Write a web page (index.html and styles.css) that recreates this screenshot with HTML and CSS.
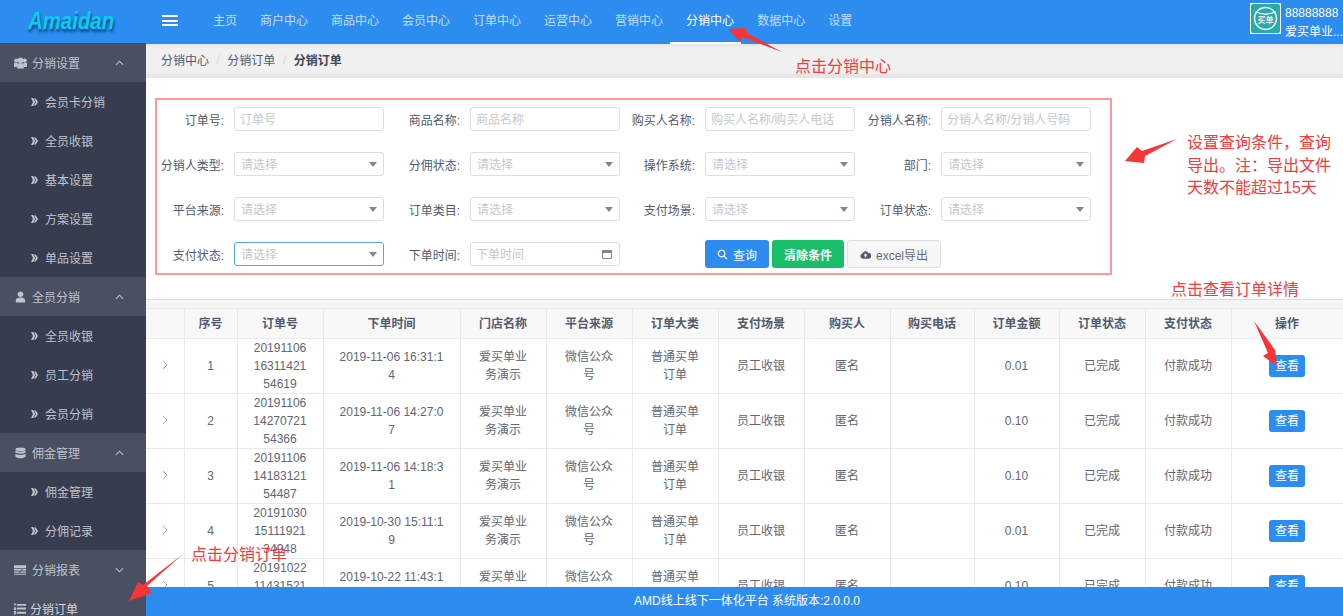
FILE: index.html
```html
<!DOCTYPE html>
<html lang="zh-CN">
<head>
<meta charset="utf-8">
<title>分销订单</title>
<link rel="stylesheet" href="styles.css">
</head>
<body>
<svg class="defs" width="0" height="0"><symbol id="dbl" viewBox="0 0 7 8"><path d="M0 0h2.200L4.200 4 2.200 8H0l2-4zM3 .500h1.800L7 4 4.800 7.500H3L5 4z"/></symbol></svg>
<div class="app">
  <header class="topbar">
    <div class="logo"><span>Amaidan</span></div>
    <div class="burger"><i></i><i></i><i></i></div>
    <nav class="nav">
      <a>主页</a><a>商户中心</a><a>商品中心</a><a>会员中心</a><a>订单中心</a><a>运营中心</a><a>营销中心</a><a class="active">分销中心</a><a>数据中心</a><a>设置</a>
    </nav>
    <div class="account">
      <svg class="avatar" viewBox="0 0 31 31" width="31" height="31">
        <rect width="31" height="31" fill="#fff"/>
        <rect x="1" y="1" width="29" height="29" rx="2" fill="#2aa9a9"/>
        <circle cx="15.500" cy="15.500" r="11" fill="none" stroke="#e8f6f6" stroke-width="1.400"/>
        <path d="M5.500 8.500 Q15.500 14 25.500 8.500" fill="none" stroke="#e8f6f6" stroke-width="1.400"/>
        <text x="15.500" y="20" text-anchor="middle" class="avatar-text">买单</text>
      </svg>
      <div class="account-text"><div>88888888</div><div>爱买单业...</div></div>
    </div>
  </header>
  <div class="body">
    <aside class="sidebar">
      <div class="group"><svg class="gi" viewBox="0 0 14 12"><circle cx="7" cy="3.200" r="3"/><circle cx="2.400" cy="3.400" r="2.200"/><circle cx="11.600" cy="3.400" r="2.200"/><path d="M3.400 6.400h7.200v5.400H3.400zM0 5.800h3.200v4.400H0zM10.800 5.800H14v4.400h-3.200z"/></svg><span>分销设置</span><svg class="chev" viewBox="0 0 10 6"><path d="M1 5l4-4 4 4"/></svg></div>
      <div class="item"><svg class="dbl"><use href="#dbl"/></svg>会员卡分销</div>
      <div class="item"><svg class="dbl"><use href="#dbl"/></svg>全员收银</div>
      <div class="item"><svg class="dbl"><use href="#dbl"/></svg>基本设置</div>
      <div class="item"><svg class="dbl"><use href="#dbl"/></svg>方案设置</div>
      <div class="item"><svg class="dbl"><use href="#dbl"/></svg>单品设置</div>
      <div class="group"><svg class="gi" viewBox="0 0 14 12"><circle cx="7" cy="3" r="3"/><path d="M2 12V9.500C2 7.500 4 6.500 7 6.500s5 1 5 3V12z"/></svg><span>全员分销</span><svg class="chev" viewBox="0 0 10 6"><path d="M1 5l4-4 4 4"/></svg></div>
      <div class="item"><svg class="dbl"><use href="#dbl"/></svg>全员收银</div>
      <div class="item"><svg class="dbl"><use href="#dbl"/></svg>员工分销</div>
      <div class="item"><svg class="dbl"><use href="#dbl"/></svg>会员分销</div>
      <div class="group"><svg class="gi" viewBox="0 0 14 12"><ellipse cx="7" cy="2" rx="5.500" ry="2"/><path d="M1.500 3.400C3 5 11 5 12.500 3.400V5.500C11 7.200 3 7.200 1.500 5.500zM1.500 6.900C3 8.500 11 8.500 12.500 6.900V9.800C11 12.400 3 12.400 1.500 9.800z"/></svg><span>佣金管理</span><svg class="chev" viewBox="0 0 10 6"><path d="M1 5l4-4 4 4"/></svg></div>
      <div class="item"><svg class="dbl"><use href="#dbl"/></svg>佣金管理</div>
      <div class="item"><svg class="dbl"><use href="#dbl"/></svg>分佣记录</div>
      <div class="group"><svg class="gi" viewBox="0 0 14 12"><path d="M0 1h13v3H0zM0 5h8v1.500H0zM9 5h4v1.500H9zM0 7.500h6V9H0zM7 7.500h6V9H7zM0 10h13v1H0z"/></svg><span>分销报表</span><svg class="chev" viewBox="0 0 10 6"><path d="M1 1l4 4 4-4"/></svg></div>
      <div class="group current"><svg class="gi" viewBox="0 0 14 12"><path d="M0 0h2v2H0zM3 .500h10v2H3zM0 4h2v3H0zM3 4.500h10v2H3zM0 8h2v4H0zM3 9h10v2H3z"/></svg><span>分销订单</span></div>
    </aside>
    <main class="main">
      <div class="crumbs"><span>分销中心</span><i>/</i><span>分销订单</span><i>/</i><b>分销订单</b></div>
      <section class="filter">
        <div class="filter-box">
          <div class="field"><label>订单号:</label><div class="ctl ph">订单号</div></div>
          <div class="field"><label>商品名称:</label><div class="ctl ph">商品名称</div></div>
          <div class="field"><label>购买人名称:</label><div class="ctl ph">购买人名称/购买人电话</div></div>
          <div class="field"><label>分销人名称:</label><div class="ctl ph">分销人名称/分销人号码</div></div>

          <div class="field"><label>分销人类型:</label><div class="ctl sel">请选择</div></div>
          <div class="field"><label>分佣状态:</label><div class="ctl sel">请选择</div></div>
          <div class="field"><label>操作系统:</label><div class="ctl sel">请选择</div></div>
          <div class="field"><label>部门:</label><div class="ctl sel">请选择</div></div>

          <div class="field"><label>平台来源:</label><div class="ctl sel">请选择</div></div>
          <div class="field"><label>订单类目:</label><div class="ctl sel">请选择</div></div>
          <div class="field"><label>支付场景:</label><div class="ctl sel">请选择</div></div>
          <div class="field"><label>订单状态:</label><div class="ctl sel">请选择</div></div>

          <div class="field"><label>支付状态:</label><div class="ctl sel focus">请选择</div></div>
          <div class="field"><label>下单时间:</label><div class="ctl ph date">下单时间
            <svg class="cal" viewBox="0 0 10 10"><path d="M0.500 1.500h9v8h-9z" fill="none" stroke="#808695"/><path d="M0 1h10v3H0z" fill="#808695"/></svg></div></div>
          <div class="actions">
            <button class="btn primary"><svg viewBox="0 0 12 12" width="11" height="11"><circle cx="5" cy="5" r="3.600" fill="none" stroke="#fff" stroke-width="1.200"/><path d="M7.700 7.700L11 11" stroke="#fff" stroke-width="1.400"/></svg>查询</button>
            <button class="btn success">清除条件</button>
            <button class="btn plain"><svg viewBox="0 0 12 9" width="11" height="9"><path d="M3 9a2.700 2.700 0 0 1-.5-5.300A3.600 3.600 0 0 1 9.300 3 3 3 0 0 1 9.500 9z" fill="#515a6e"/><path d="M6 3l2 2.500H4z M5.300 5h1.400v2.500H5.300z" fill="#f7f7f7"/></svg>excel导出</button>
          </div>
        </div>
      </section>
      <div class="table-wrap">
        <table class="orders">
          <colgroup>
            <col class="c38"><col class="c53"><col class="c86"><col class="c137"><col class="c86"><col class="c86"><col class="c86"><col class="c86"><col class="c86"><col class="c84"><col class="c85"><col class="c86"><col class="c86"><col class="c112">
          </colgroup>
          <thead>
            <tr><th></th><th>序号</th><th>订单号</th><th>下单时间</th><th>门店名称</th><th>平台来源</th><th>订单大类</th><th>支付场景</th><th>购买人</th><th>购买电话</th><th>订单金额</th><th>订单状态</th><th>支付状态</th><th>操作</th></tr>
          </thead>
          <tbody>
            <tr><td class="exp"><svg viewBox="0 0 6 10" width="6" height="10"><path d="M1 1l4 4-4 4"/></svg></td><td>1</td><td>201911061631142154619</td><td>2019-11-06 16:31:14</td><td>爱买单业务演示</td><td>微信公众号</td><td>普通买单订单</td><td>员工收银</td><td>匿名</td><td></td><td>0.01</td><td>已完成</td><td>付款成功</td><td><button class="view">查看</button></td></tr>
            <tr><td class="exp"><svg viewBox="0 0 6 10" width="6" height="10"><path d="M1 1l4 4-4 4"/></svg></td><td>2</td><td>201911061427072154366</td><td>2019-11-06 14:27:07</td><td>爱买单业务演示</td><td>微信公众号</td><td>普通买单订单</td><td>员工收银</td><td>匿名</td><td></td><td>0.10</td><td>已完成</td><td>付款成功</td><td><button class="view">查看</button></td></tr>
            <tr><td class="exp"><svg viewBox="0 0 6 10" width="6" height="10"><path d="M1 1l4 4-4 4"/></svg></td><td>3</td><td>201911061418312154487</td><td>2019-11-06 14:18:31</td><td>爱买单业务演示</td><td>微信公众号</td><td>普通买单订单</td><td>员工收银</td><td>匿名</td><td></td><td>0.10</td><td>已完成</td><td>付款成功</td><td><button class="view">查看</button></td></tr>
            <tr><td class="exp"><svg viewBox="0 0 6 10" width="6" height="10"><path d="M1 1l4 4-4 4"/></svg></td><td>4</td><td>201910301511192134948</td><td>2019-10-30 15:11:19</td><td>爱买单业务演示</td><td>微信公众号</td><td>普通买单订单</td><td>员工收银</td><td>匿名</td><td></td><td>0.01</td><td>已完成</td><td>付款成功</td><td><button class="view">查看</button></td></tr>
            <tr><td class="exp"><svg viewBox="0 0 6 10" width="6" height="10"><path d="M1 1l4 4-4 4"/></svg></td><td>5</td><td>201910221143152154210</td><td>2019-10-22 11:43:15</td><td>爱买单业务演示</td><td>微信公众号</td><td>普通买单订单</td><td>员工收银</td><td>匿名</td><td></td><td>0.10</td><td>已完成</td><td>付款成功</td><td><button class="view">查看</button></td></tr>
          </tbody>
        </table>
      </div>
      <footer class="footer">AMD线上线下一体化平台 系统版本:2.0.0.0</footer>
    </main>
  </div>
  <svg class="arrows" width="1343" height="616" viewBox="0 0 1343 616">
    <polygon points="728,29 746,28 747,33 782,52 742,37 740,42"/>
    <polygon points="1125,161 1137,147 1142,151 1177,139 1145,156 1144,163"/>
    <polygon points="1254,321 1275,350 1277,366 1263,356 1268,353"/>
    <polygon points="183,554 147,586 152,593 129,601 138,582 143,585"/>
  </svg>
  <div class="note n1">点击分销中心</div>
  <div class="note n2">设置查询条件，查询<br>导出。注：导出文件<br>天数不能超过15天</div>
  <div class="note n3">点击查看订单详情</div>
  <div class="note n4">点击分销订单</div>
</div>
</body>
</html>
```

FILE: styles.css
```css
* { box-sizing: border-box; }
html, body { margin: 0; padding: 0; height: 100%; overflow: hidden; }
body {
  font-family: "Liberation Sans", "Noto Sans CJK SC", sans-serif;
  font-size: 12px;
  color: #515a6e;
  background: #fff;
}
.defs { position: absolute; }
.app { position: relative; width: 1343px; height: 616px; display: flex; flex-direction: column; overflow: hidden; }

/* top bar */
.topbar { height: 44px; flex: none; background: #2d8cf0; display: flex; align-items: stretch; color: #fff; }
.logo {
  width: 146px; padding: 7px 0 0 28px;
  font-size: 24px; line-height: 28px; font-weight: bold; font-style: italic;
  color: #08cdec; text-shadow: 1px 3px 3px #0b3f83;
}
.logo span { display: block; transform: scaleX(.85); transform-origin: left center; }
.burger { width: 16px; margin: 15px 0 0 16px; height: 11px; display: flex; flex-direction: column; justify-content: space-between; }
.burger i { display: block; height: 2px; background: #fff; }
.nav { display: flex; margin-left: 23.500px; }
.nav a { padding: 0 11.500px; line-height: 42px; height: 44px; color: rgba(255, 255, 255, .72); }
.nav a.active { color: #fff; position: relative; }
.nav a.active::after { content: ""; position: absolute; left: -5px; bottom: 0; width: 71px; height: 2px; background: #fff; }
.account { margin-left: auto; display: flex; width: 93px; padding-top: 3px; }
.avatar { flex: none; }
.avatar-text { font-size: 8px; font-weight: bold; fill: #e8f6f6; }
.account-text { margin-left: 4px; line-height: 18.500px; white-space: nowrap; padding-top: 1px; }

/* layout */
.body { flex: 1; min-height: 0; display: flex; }
.sidebar { width: 146px; flex: none; margin-top: -1px; position: relative; background: #373d4f; color: #bfc3cc; overflow: hidden; height: 573px; }
.group { height: 39px; background: #4a5061; display: flex; align-items: center; padding-left: 14px; }
.group .gi { width: 13px; height: 12px; fill: #bfc3cc; flex: none; }
.group span { margin-left: 5px; width: 48px; }
.chev { width: 9px; height: 6px; margin-left: 35px; fill: none; stroke: #bfc3cc; stroke-width: 1.200; }
.group.current { color: #d3d6dc; }
.group.current span { margin-left: 3px; }
.item { height: 39px; padding-left: 31px; display: flex; align-items: center; }
.dbl { width: 7px; height: 8px; margin-right: 7px; fill: #bfc3cc; flex: none; }

.main { flex: 1; min-width: 0; display: flex; flex-direction: column; }
.crumbs {
  height: 34px; flex: none; padding: 1px 0 0 15px;
  background: #f0f0f0; border-bottom: 4px solid #e6e6e6; box-shadow: inset 0 2px 2px #e6e6e6;
  display: flex; align-items: center; color: #515a6e;
}
.crumbs i { font-style: normal; color: #d8d8d8; margin: 0 7.500px; }
.crumbs b { color: #3f4554; }

/* filter */
.filter { height: 222px; flex: none; padding: 20px 0 0 9px; border-bottom: 1px solid #ddd; }
.filter-box {
  width: 957px; height: 177px; border: 2px solid #ff9999; padding: 7px 0 0 0;
  display: grid; grid-template-columns: 227px 236px 235px 236px; grid-auto-rows: 24px; row-gap: 21px;
}
.field { display: flex; justify-content: flex-end; align-items: center; }
.field label { margin-right: 10px; white-space: nowrap; }
.ctl {
  position: relative; width: 150px; height: 24px; line-height: 24px; padding: 0 6px 0 5px;
  border: 1px solid #dcdee2; border-radius: 3px; color: #c5c8ce; background: #fff; white-space: nowrap; overflow: hidden;
}
.sel { padding-left: 6px; }
.sel::after {
  content: ""; position: absolute; right: 6px; top: 9px;
  border-left: 4px solid transparent; border-right: 4px solid transparent; border-top: 5px solid #808695;
}
.focus { border-color: #57a3f3; }
.cal { position: absolute; right: 7px; top: 6px; width: 10px; height: 10px; }
.actions { grid-column: 3 / 5; display: flex; align-items: center; gap: 3px; padding-left: 85px; height: 28px; align-self: center; }
.btn {
  font: inherit; height: 28px; border-radius: 3px; border: 1px solid transparent; padding: 0;
  display: flex; align-items: center; justify-content: center; gap: 5px;
}
.primary { width: 64px; background: #2d8cf0; color: #fff; }
.success { width: 72px; background: #19be6b; color: #fff; font-weight: bold; }
.plain { width: 94px; background: #f7f7f7; border-color: #dcdee2; color: #626a7b; }

/* table */
.table-wrap { flex: 1; min-height: 0; overflow: hidden; padding-top: 8px; background: #f5f5f5; }
.orders { table-layout: fixed; width: 1197px; border-collapse: collapse; background: #fff; }
.c38 { width: 38px; } .c53 { width: 53px; } .c84 { width: 84px; } .c85 { width: 85px; } .c86 { width: 86px; } .c112 { width: 112px; } .c137 { width: 137px; }
.orders th, .orders td { border: 1px solid #e8eaec; border-left: 0; text-align: center; padding: 0 15px; line-height: 18px; word-break: break-all; }
.orders th { height: 30px; background: #f8f8f9; font-weight: bold; padding: 0 8px; }
.orders td { height: 55px; color: #5f6675; }
.orders td:first-child, .orders th:first-child { padding: 0; }
.orders td:nth-child(2) { padding: 0 4px; }
.exp svg { fill: none; stroke: #a6a9b0; stroke-width: 1; display: block; margin: -2px 0 0 16px; }
.view { font: inherit; width: 36px; height: 22px; padding: 0; border: 0; border-radius: 3px; background: #2d8cf0; color: #fff; display: block; margin: 0 auto; }
.footer { height: 29px; flex: none; background: #2d8cf0; color: #fff; text-align: center; line-height: 29px; padding-left: 5px; }

/* annotations */
.arrows { position: absolute; left: 0; top: 0; pointer-events: none; }
.arrows polygon { fill: #f73535; }
.note { position: absolute; font-size: 16px; color: #f83a3a; white-space: nowrap; line-height: 22.500px; }
.n1 { left: 795px; top: 56px; }
.n2 { left: 1187px; top: 132px; }
.n3 { left: 1171px; top: 279px; }
.n4 { left: 191px; top: 544px; }
```
